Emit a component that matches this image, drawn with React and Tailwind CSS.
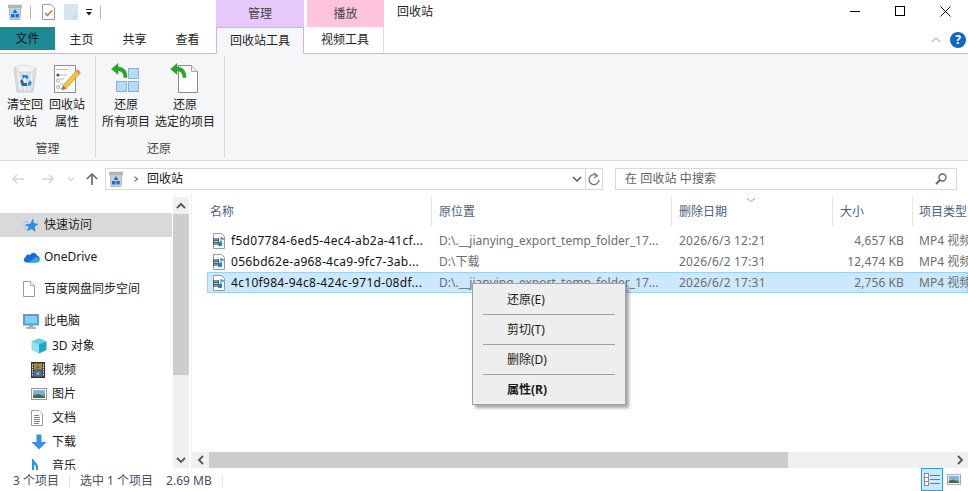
import React from "react";

const Bin = ({ s = 30 }) => (
  <svg width={s} height={s} viewBox="0 0 30 30" className="shrink-0">
    <path d="M4 4 L26 4 L23 28 L7 28 Z" fill="#dcdedf" stroke="#c4c6c8" strokeWidth="0.8" />
    <path d="M5 3 L13 1 L20 2 L26 4 L21 8 L9 8 Z" fill="#f2f3f3" stroke="#cfd1d2" strokeWidth="0.6" />
    <path d="M8 9 L11 26 M15 9 L15 27 M22 9 L19 26" stroke="#f4f4f4" strokeWidth="1.5" />
    <path d="M12 11 L17 11 L19 14 L16 15 L15 13 L13 15 Z" fill="#1a86d0" />
    <path d="M10 17 L12 15 L14 19 L17 19 L17 22 L12 22 Z" fill="#0f6fc0" />
    <path d="M20 16 L22 19 L20 22 L18 22 L18 19 Z" fill="#2b9be0" />
  </svg>
);

const SmallBin = () => (
  <svg width="14" height="16" viewBox="0 0 14 16" className="shrink-0">
    <path d="M1 2.5 H13 L12 15.5 H2 Z" fill="#c4d2de" stroke="#8d9399" strokeWidth="0.6" />
    <path d="M0.5 1 H13.5 V3.5 H0.5 Z" fill="#b5b9bc" stroke="#9aa0a5" strokeWidth="0.5" />
    <path d="M7 5 L9.5 9 H4.5 Z M3 10 H6.5 V13.5 H3 Z M7.5 10 H11 L10.5 13.5 H7.5 Z" fill="#0f72d0" />
  </svg>
);

const Notes = () => (
  <svg width="30" height="30" viewBox="0 0 30 30" className="shrink-0">
    <rect x="2.5" y="1.5" width="21" height="27" fill="#fafafa" stroke="#8f8f8f" />
    <path d="M4 5.5 H16 M8 11 H15 M8 15 H12 M8 20 H11 M8 24.5 H15" stroke="#b9b9b9" />
    <circle cx="6" cy="11" r="1.6" fill="#555" />
    <circle cx="6" cy="16.5" r="1.5" fill="#fff" stroke="#888" strokeWidth="0.7" />
    <circle cx="6" cy="23" r="1.5" fill="#fff" stroke="#888" strokeWidth="0.7" />
    <path d="M10 26 L11 21.5 L24 7 L27.5 10 L14 24.5 Z" fill="#f5c33b" stroke="#c28a1e" strokeWidth="0.6" />
    <path d="M24 7 L25.5 5.3 L28.8 8.5 L27.5 10 Z" fill="#ec7a7a" />
    <path d="M10 26 L11 21.5 L14 24.5 Z" fill="#8c7a5a" />
  </svg>
);

const GreenArrow = ({ className = "" }) => (
  <svg width="17" height="17" viewBox="0 0 17 17" className={className}>
    <path d="M7 0.5 L0.5 6 L7 11.5 L7 8 C10.5 7.5 12.5 10 13 14.5 L16 14.5 C16.5 8 12.5 3.8 7 4 Z" fill="#27a927" stroke="#1c8a1c" strokeWidth="0.4" />
  </svg>
);

const RestoreAll = () => (
  <div className="relative w-[30px] h-[30px]">
    <svg width="30" height="30" viewBox="0 0 30 30" className="block">
      <rect x="17.5" y="4.5" width="10" height="10" fill="#b5dcf7" stroke="#8eb2cd" />
      <rect x="5.5" y="17.5" width="10" height="10" fill="#b5dcf7" stroke="#8eb2cd" />
      <rect x="17.5" y="17.5" width="10" height="10" fill="#b5dcf7" stroke="#8eb2cd" />
    </svg>
    <GreenArrow className="absolute left-[0px] top-[-1px]" />
  </div>
);

const RestoreOne = () => (
  <div className="relative w-[30px] h-[30px]">
    <svg width="30" height="30" viewBox="0 0 30 30" className="block">
      <path d="M8.5 1.5 H21.5 L27.5 7.5 V28.5 H8.5 Z" fill="#fdfdfd" stroke="#8a8a8a" />
      <path d="M21.5 1.5 V7.5 H27.5" fill="#f0f0f0" stroke="#a8a8a8" />
    </svg>
    <GreenArrow className="absolute left-[0px] top-[-1px]" />
  </div>
);

const Mp4 = () => (
  <svg width="14" height="16" viewBox="0 0 14 16" className="shrink-0">
    <path d="M1.5 0.5 H9.5 L12.5 3.5 V15.5 H1.5 Z" fill="#fdfdfd" stroke="#9a9a9a" />
    <rect x="1" y="5" width="6" height="7" fill="#4e5d6c" />
    <path d="M2 6 H6 M2 8.5 H6 M2 11 H6" stroke="#dfe6ec" strokeWidth="0.8" />
    <path d="M9 4.5 V11 M9 4.5 L12 6.5" stroke="#1a82d2" strokeWidth="1.1" fill="none" />
    <circle cx="8" cy="11" r="2.3" fill="#1a82d2" />
  </svg>
);

const Star = () => (
  <svg width="16" height="16" viewBox="0 0 16 16" className="shrink-0">
    <path d="M10 1 L11 6 L15.5 7 L11.8 9.8 L12.5 15 L8.5 12 L4 14.5 L5.5 10 L2 7.5 L7.5 6.5 Z" fill="#2f8fe0" />
    <path d="M0 5 H5 M0 9 H3 M1 12 H4" stroke="#7cc0ef" />
  </svg>
);

const Cloud = () => (
  <svg width="17" height="12" viewBox="0 0 17 12" className="shrink-0">
    <path d="M3.5 11.5 C0.5 11.5 -0.3 7.5 2.5 6.3 C3 3.5 6 3 7 4.2 C8 1 13 0.5 14 4.5 C16.5 5 17.5 8 16 10 L12 11.5 Z" fill="#1470d8" />
    <path d="M6 11.5 L12 6.5 C14 5.8 17.5 7 16.5 10 C16 11 15 11.5 14 11.5 Z" fill="#35a6ee" />
  </svg>
);

const BlankDoc = () => (
  <svg width="12" height="16" viewBox="0 0 12 16" className="shrink-0">
    <path d="M0.5 0.5 H7.5 L11.5 4.5 V15.5 H0.5 Z" fill="#fff" stroke="#9c9c9c" />
    <path d="M7.5 0.5 V4.5 H11.5" fill="#eee" stroke="#b5b5b5" />
  </svg>
);

const Monitor = () => (
  <svg width="16" height="15" viewBox="0 0 16 15" className="shrink-0">
    <rect x="0.5" y="0.5" width="15" height="10.5" fill="#3ba4dd" stroke="#7f96a8" />
    <rect x="2" y="2" width="12" height="7.5" fill="#7fd0f5" />
    <path d="M6 11 H10 V13 H6 Z" fill="#96a8b6" />
    <path d="M3 14 H13" stroke="#8aa0b2" strokeWidth="1.5" />
  </svg>
);

const Cube = () => (
  <svg width="16" height="16" viewBox="0 0 16 16" className="shrink-0">
    <path d="M8 0.5 L15.5 3.5 V12 L8 15.5 Z" fill="#1fa8c8" />
    <path d="M8 0.5 L0.5 3.5 V12 L8 15.5 Z" fill="#8fe2ee" />
    <path d="M0.5 3.5 L8 6.5 L15.5 3.5 L8 0.5 Z" fill="#5fcfe2" />
  </svg>
);

const Film = () => (
  <svg width="14" height="16" viewBox="0 0 14 16" className="shrink-0">
    <rect x="0.5" y="0.5" width="13" height="15" fill="#4a4a4a" stroke="#333" />
    <path d="M1.5 2 V14 M12.5 2 V14" stroke="#ddd" strokeWidth="1" strokeDasharray="1.5 1" />
    <rect x="3" y="1.5" width="8" height="6" fill="#b08a2f" />
    <rect x="3" y="8.5" width="8" height="6" fill="#2f78b5" />
    <circle cx="7" cy="5" r="1.5" fill="#3a7a3a" />
    <circle cx="7" cy="11.5" r="1.5" fill="#d0a030" />
  </svg>
);

const Pic = ({ w = 16, h = 12 }) => (
  <svg width={w} height={h} viewBox="0 0 16 12" className="shrink-0 block">
    <rect x="0.5" y="0.5" width="15" height="11" fill="#fff" stroke="#9a9a9a" />
    <rect x="2" y="2" width="12" height="4" fill="#7fb4dd" />
    <rect x="2" y="6" width="12" height="4" fill="#7f9d8c" />
    <path d="M2 8 L7 6 L14 9 V10 H2 Z" fill="#3f6a57" />
  </svg>
);

const DocLines = () => (
  <svg width="12" height="16" viewBox="0 0 12 16" className="shrink-0">
    <path d="M0.5 0.5 H8 L11.5 4 V15.5 H0.5 Z" fill="#fff" stroke="#9c9c9c" />
    <path d="M3 5.5 H8 M3 7.5 H9 M3 9.5 H9 M3 11.5 H9 M3 13.5 H8" stroke="#3a9ad9" />
  </svg>
);

const Down = () => (
  <svg width="16" height="16" viewBox="0 0 16 16" className="shrink-0">
    <path d="M5.5 0.5 H10.5 V8 H15.5 L8 15.5 L0.5 8 H5.5 Z" fill="#3a8fe0" />
  </svg>
);

const Music = () => (
  <svg width="8" height="16" viewBox="0 0 8 16" className="shrink-0">
    <path d="M1 1 H2.5 C3 4 7 5 7 9 V16 H5 V9 C5 8 3.5 7 3 6.5 V16 H1 Z" fill="#1e9be8" />
  </svg>
);

const Chevron = ({ d, c = "#666", w = 2, size = 10 }) => (
  <svg width={size} height={size} viewBox="0 0 10 10" className="shrink-0 block">
    <path d={d} stroke={c} strokeWidth={w} fill="none" />
  </svg>
);

const NavRow = ({ icon, label, deep, className = "" }) => (
  <div className={`flex items-center h-[24px] ${className}`}>
    <div className={`${deep ? "w-[48px] pl-[31px]" : "w-[40px] pl-[23px]"} flex justify-start shrink-0 mr-[4px]`}>{icon}</div>
    <span className="text-[#1a1a1a] whitespace-nowrap">{label}</span>
  </div>
);

const ColHead = ({ w, label, pad = "pl-[7px]", children }) => (
  <div className={`relative shrink-0 h-full flex items-center border-r border-[#e5e5e5] ${pad} ${w}`}>
    <span className="text-[#4c607a] whitespace-nowrap">{label}</span>
    {children}
  </div>
);

const rows = [
  ["f5d07784-6ed5-4ec4-ab2a-41cf...", "D:\\.__jianying_export_temp_folder_17...", "2026/6/3 12:21", "4,657 KB"],
  ["056bd62e-a968-4ca9-9fc7-3ab...", "D:\\下载", "2026/6/2 17:31", "12,474 KB"],
  ["4c10f984-94c8-424c-971d-08df...", "D:\\.__jianying_export_temp_folder_17...", "2026/6/2 17:31", "2,756 KB"],
];

const MenuItem = ({ children, bold }) => (
  <div className={`h-[29px] flex items-center pl-[34px] text-[#1a1a1a] ${bold ? "font-bold" : ""}`}>{children}</div>
);

const RibbonBtn = ({ w, icon, l1, l2 }) => (
  <div className={`${w} flex flex-col items-center shrink-0`}>
    <div className="h-[30px] mt-[8px]">{icon}</div>
    <div className="mt-[2px] leading-[17px] text-center text-[#222] whitespace-nowrap">{l1}<br />{l2}</div>
  </div>
);

export default function App() {
  return (
    <div className="w-[968px] h-[491px] overflow-hidden bg-white text-[12px] leading-[16px] font-['Noto_Sans','Noto_Sans_CJK_SC',sans-serif] flex flex-col">
      {/* title bar */}
      <div className="h-[27px] flex shrink-0">
        <div className="w-[216px] flex items-center pl-[8px] shrink-0 pb-[3px]">
          <SmallBin />
          <div className="w-px h-[13px] bg-[#b5b5b5] ml-[8px]" />
          <svg width="13" height="16" viewBox="0 0 13 16" className="ml-[11px] shrink-0">
            <path d="M0.5 0.5 H9 L12.5 4 V15.5 H0.5 Z" fill="#fff" stroke="#9c9c9c" />
            <path d="M3 9 L5.5 11.5 L10 6.5" stroke="#e2622a" strokeWidth="1.4" fill="none" />
          </svg>
          <svg width="14" height="16" viewBox="0 0 14 16" className="ml-[9px] shrink-0">
            <path d="M0 0 H14 V16 H0 Z" fill="#d9e4f3" />
            <path d="M10 16 V12 H14" fill="none" stroke="#bcc9dc" />
          </svg>
          <svg width="8" height="8" viewBox="0 0 8 8" className="ml-[7px] shrink-0">
            <path d="M1 1.5 H7" stroke="#222" />
            <path d="M1 4 H7 L4 7.5 Z" fill="#222" />
          </svg>
          <div className="w-px h-[13px] bg-[#b5b5b5] ml-[7px]" />
        </div>
        <div className="w-[88px] bg-[#e6c8fb] flex items-center justify-center text-[#444] shrink-0">管理</div>
        <div className="w-[3px] shrink-0" />
        <div className="w-[77px] bg-[#fdc4dc] flex items-center justify-center text-[#444] shrink-0">播放</div>
        <div className="ml-[13px] flex items-center text-[#222] pb-[4px]">回收站</div>
        <div className="ml-auto flex items-center h-full pr-[17px] pb-[5px]">
          <div className="w-[10px] h-px bg-black mr-[35px]" />
          <div className="w-[10px] h-[10px] border border-black mr-[35px]" />
          <svg width="11" height="11" viewBox="0 0 11 11"><path d="M0.5 0.5 L10.5 10.5 M10.5 0.5 L0.5 10.5" stroke="#111" /></svg>
        </div>
      </div>
      {/* tab row */}
      <div className="h-[27px] flex shrink-0 border-b border-[#d9abf1] items-start">
        <div className="w-[55px] h-[23px] bg-[#1e8a96] flex items-center justify-center text-[#06191c] shrink-0">文件</div>
        <div className="w-[53px] h-[26px] flex items-center justify-center text-[#222] shrink-0">主页</div>
        <div className="w-[53px] h-[26px] flex items-center justify-center text-[#222] shrink-0">共享</div>
        <div className="w-[53px] h-[26px] flex items-center justify-center text-[#222] shrink-0">查看</div>
        <div className="w-[2px] shrink-0" />
        <div className="w-[88px] h-[27px] bg-[#f5f6f7] border-x border-t border-[#d9abf1] flex items-center justify-center text-[#222] shrink-0">回收站工具</div>
        <div className="w-[3px] shrink-0" />
        <div className="w-[77px] h-[26px] border-r border-[#dcdcdc] flex items-center justify-center text-[#222] shrink-0">视频工具</div>
        <div className="ml-auto h-[26px] flex items-center pr-[2px]">
          <Chevron d="M1 7 L5 3 L9 7" c="#b8b8b8" w={1.2} />
          <div className="ml-[9px] w-[16px] h-[16px] rounded-full bg-[#1367c0] text-white font-bold flex items-center justify-center text-[12px]">?</div>
        </div>
      </div>
      {/* ribbon */}
      <div className="h-[107px] shrink-0 bg-[#f5f6f7] border-b border-[#dadbdc] flex">
        <div className="w-[96px] h-[102px] mt-[2px] border-r border-[#dcdddf] flex flex-col shrink-0">
          <div className="flex pl-[4px] h-[83px] shrink-0">
            <RibbonBtn w="w-[42px]" icon={<Bin />} l1="清空回" l2="收站" />
            <RibbonBtn w="w-[42px]" icon={<Notes />} l1="回收站" l2="属性" />
          </div>
          <div className="text-center text-[#444] leading-[20px]">管理</div>
        </div>
        <div className="w-[129px] h-[102px] mt-[2px] border-r border-[#dcdddf] flex flex-col shrink-0">
          <div className="flex pl-[5px] h-[83px] shrink-0">
            <RibbonBtn w="w-[50px]" icon={<RestoreAll />} l1="还原" l2="所有项目" />
            <RibbonBtn w="w-[68px]" icon={<RestoreOne />} l1="还原" l2="选定的项目" />
          </div>
          <div className="text-center text-[#444] leading-[20px] pr-[2px]">还原</div>
        </div>
      </div>
      {/* address row */}
      <div className="h-[33px] shrink-0 flex items-center pt-[2px]">
        <div className="w-[105px] flex items-center pl-[12px] shrink-0">
          <svg width="12" height="12" viewBox="0 0 14 12" className="shrink-0"><path d="M6 1 L1 6 L6 11 M1 6 H14" stroke="#d6d6d6" strokeWidth="1.8" fill="none" /></svg>
          <svg width="12" height="12" viewBox="0 0 14 12" className="ml-[18px] shrink-0"><path d="M8 1 L13 6 L8 11 M0 6 H13" stroke="#d6d6d6" strokeWidth="1.8" fill="none" /></svg>
          <div className="ml-[12px]"><Chevron d="M2 3.5 L5 6.5 L8 3.5" c="#d6d6d6" w={1.2} size={10} /></div>
          <svg width="12" height="14" viewBox="0 0 14 14" className="ml-[10px] shrink-0"><path d="M1 7 L7 1 L13 7 M7 1 V14" stroke="#6e6e6e" strokeWidth="2" fill="none" /></svg>
        </div>
        <div className="w-[498px] h-[22px] border border-[#d9d9d9] flex items-center shrink-0">
          <div className="ml-[3px] flex items-center"><SmallBin /></div>
          <div className="ml-[9px]"><Chevron d="M3 2 L7 5 L3 8" c="#666" w={1.4} size={8} /></div>
          <span className="ml-[7px] text-[#111]">回收站</span>
          <div className="ml-auto flex items-center h-full">
            <div className="mr-[3px]"><Chevron d="M1 3 L5 7 L9 3" c="#555" w={1.5} /></div>
            <div className="w-px h-full bg-[#d9d9d9]" />
            <svg width="14" height="14" viewBox="0 0 14 14" className="mx-[1px] shrink-0">
              <path d="M10.5 4 A5 5 0 1 0 12 8" stroke="#777" strokeWidth="1.4" fill="none" />
              <path d="M7 1 L10.5 4 L7 6" stroke="#777" strokeWidth="1.2" fill="none" />
            </svg>
          </div>
        </div>
        <div className="w-[12px] shrink-0" />
        <div className="w-[342px] h-[22px] border border-[#d9d9d9] flex items-center pl-[9px] pr-[9px] shrink-0">
          <span className="text-[#5e5e5e] tracking-[0.1px]">在 回收站 中搜索</span>
          <svg width="12" height="12" viewBox="0 0 12 12" className="ml-auto">
            <circle cx="7.5" cy="4.5" r="3.5" stroke="#666" strokeWidth="1.4" fill="none" />
            <path d="M5 7 L1 11" stroke="#666" strokeWidth="2" />
          </svg>
        </div>
      </div>
      {/* body */}
      <div className="flex-1 min-h-0 flex">
        {/* nav */}
        <div className="w-[172px] shrink-0 overflow-hidden pt-[19px]">
          <NavRow icon={<Star />} label="快速访问" className="bg-[#d9d9d9]" />
          <NavRow icon={<Cloud />} label="OneDrive" className="mt-[8px]" />
          <NavRow icon={<BlankDoc />} label="百度网盘同步空间" className="mt-[8px]" />
          <NavRow icon={<Monitor />} label="此电脑" className="mt-[8px]" />
          <NavRow deep icon={<Cube />} label="3D 对象" className="mt-[1px]" />
          <NavRow deep icon={<Film />} label="视频" />
          <NavRow deep icon={<Pic />} label="图片" />
          <NavRow deep icon={<DocLines />} label="文档" />
          <NavRow deep icon={<Down />} label="下载" />
          <NavRow deep icon={<Music />} label="音乐" />
        </div>
        {/* nav scrollbar */}
        <div className="w-[16px] ml-[1px] mt-[3px] mb-[2px] shrink-0 bg-[#f0f0f0] flex flex-col">
          <div className="h-[17px] flex items-center justify-center"><Chevron d="M1 7 L5 3 L9 7" c="#555" w={1.8} /></div>
          <div className="h-[161px] bg-[#cdcdcd]" />
          <div className="mt-auto h-[17px] flex items-center justify-center"><Chevron d="M1 3 L5 7 L9 3" c="#555" w={1.8} /></div>
        </div>
        <div className="w-[2px] shrink-0" />
        {/* files */}
        <div className="flex-1 min-w-0 border-l border-[#f0f0f0] flex flex-col">
          <div className="flex-1 min-h-0 overflow-hidden">
            <div className="flex h-[29px] mt-[3px] pl-[15px] whitespace-nowrap">
              <ColHead w="w-[225px]" pad="pl-[3px]" label="名称" />
              <ColHead w="w-[240px]" label="原位置" />
              <ColHead w="w-[161px]" label="删除日期">
                <div className="absolute left-[74px] top-[-2px]"><Chevron d="M1 3 L5 6.5 L9 3" c="#9aa3ad" w={1} /></div>
              </ColHead>
              <ColHead w="w-[80px]" label="大小" />
              <div className="pl-[6px] flex items-center text-[#4c607a] whitespace-nowrap">项目类型</div>
            </div>
            <div className="ml-[15px] mt-[4px] overflow-hidden">
              {rows.map((r, i) => (
                <div
                  key={r[0]}
                  className={`flex items-center h-[21px] whitespace-nowrap border ${
                    i === 2 ? "bg-[#cce8ff] border-[#99d1ff]" : "border-transparent"
                  }`}
                >
                  <div className="w-[224px] flex items-center pl-[4px] shrink-0">
                    <Mp4 />
                    <span className="ml-[5px] text-[#111] tracking-[0.3px]">{r[0]}</span>
                  </div>
                  <div className="w-[240px] pl-[7px] text-[#6d6d6d] shrink-0">{r[1]}</div>
                  <div className="w-[161px] pl-[7px] text-[#6d6d6d] shrink-0 tracking-[0.2px]">{r[2]}</div>
                  <div className="w-[80px] pr-[9px] text-right text-[#6d6d6d] shrink-0 tracking-[0.1px]">{r[3]}</div>
                  <div className="pl-[6px] text-[#6d6d6d] shrink-0">MP4 视频文件</div>
                </div>
              ))}
            </div>
          </div>
          {/* hscroll */}
          <div className="h-[16px] mb-[2px] bg-[#f0f0f0] flex items-center shrink-0">
            <div className="w-[17px] flex justify-center"><Chevron d="M7 1 L3 5 L7 9" c="#555" w={1.8} /></div>
            <div className="w-[579px] h-full bg-[#cdcdcd]" />
            <div className="ml-auto w-[17px] flex justify-center"><Chevron d="M3 1 L7 5 L3 9" c="#555" w={1.8} /></div>
          </div>
        </div>
      </div>
      {/* status */}
      <div className="h-[21px] shrink-0 flex items-center text-[#3f5064] whitespace-nowrap">
        <span className="ml-[13px]">3 个项目</span>
        <div className="w-px h-[12px] bg-[#e3e3e3] ml-[10px]" />
        <span className="ml-[10px]">选中 1 个项目</span>
        <span className="ml-[13px]">2.69 MB</span>
        <div className="w-px h-[12px] bg-[#e3e3e3] ml-[10px]" />
        <div className="ml-auto w-[22px] h-[23px] self-end bg-[#cce8ff] border border-[#26a0da] flex items-center justify-center shrink-0">
          <svg width="16" height="14" viewBox="0 0 16 14">
            <rect x="0.5" y="0.5" width="4" height="4" fill="#fff" stroke="#8a8a8a" />
            <rect x="0.5" y="4.5" width="4" height="4" fill="#fff" stroke="#8a8a8a" />
            <rect x="0.5" y="8.5" width="4" height="4" fill="#fff" stroke="#8a8a8a" />
            <path d="M6 2.5 H16 M6 6.5 H16 M6 10.5 H16" stroke="#777" />
          </svg>
        </div>
        <div className="ml-[4px] mr-[7px] mb-[3px] shrink-0"><Pic w={14} h={11} /></div>
      </div>
      {/* context menu */}
      <div className="absolute left-[472px] top-[283px] w-[154px] h-[122px] bg-[#eeeeee] border border-[#a0a0a0] shadow-[3px_3px_3px_rgba(0,0,0,0.35)] pt-px">
        <MenuItem>还原(E)</MenuItem>
        <div className="h-px bg-[#a0a0a0] mx-[10px]" />
        <MenuItem>剪切(T)</MenuItem>
        <div className="h-px bg-[#a0a0a0] mx-[10px]" />
        <MenuItem>删除(D)</MenuItem>
        <div className="h-px bg-[#a0a0a0] mx-[10px]" />
        <MenuItem bold>属性(R)</MenuItem>
      </div>
    </div>
  );
}
